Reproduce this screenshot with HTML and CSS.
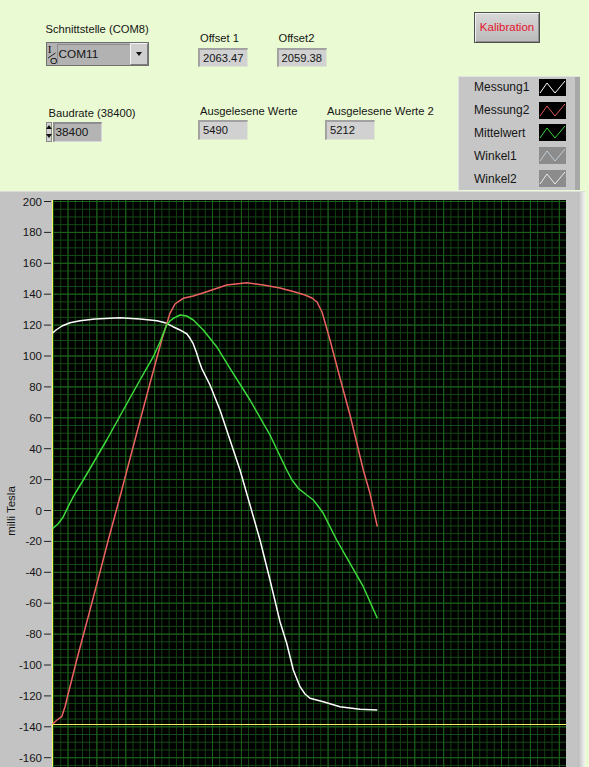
FILE: index.html
```html
<html>
<head>
    <meta charset="UTF-8"/>
    <title>Magnetfeld Messung</title>
    <link rel="stylesheet" href="styles.css">
</head>
<body>
<div class="panel">
    <div class="row row1">
        <div class="ctl ctl-port">
            <div class="lbl">Schnittstelle (COM8)</div>
            <div class="combo">
                <svg class="io" width="10" height="22" viewBox="0 0 10 22">
                    <text x="1" y="10" font-size="10" font-family="Liberation Serif, serif">I</text>
                    <line x1="1" y1="15" x2="8.5" y2="10" stroke="#111" stroke-width="0.9"/>
                    <text x="3" y="20.5" font-size="9.5" font-family="Liberation Sans, sans-serif">O</text>
                </svg>
                <div class="combo-field">COM11</div>
                <div class="combo-drop"><span class="tri-down"></span></div>
            </div>
        </div>
        <div class="ctl ctl-off1">
            <div class="lbl">Offset 1</div>
            <div class="ind">2063.47</div>
        </div>
        <div class="ctl ctl-off2">
            <div class="lbl">Offset2</div>
            <div class="ind">2059.38</div>
        </div>
        <button class="btn-kal">Kalibration</button>
    </div>
    <div class="row row2">
        <div class="ctl ctl-baud">
            <div class="lbl lbl-baud">Baudrate (38400)</div>
            <div class="numeric">
                <div class="spin"><span class="tri-up"></span><span class="tri-down"></span></div>
                <div class="num-field">38400</div>
            </div>
        </div>
        <div class="ctl ctl-werte">
            <div class="lbl">Ausgelesene Werte</div>
            <div class="ind ind-tall">5490</div>
        </div>
        <div class="ctl ctl-werte2">
            <div class="lbl">Ausgelesene Werte 2</div>
            <div class="ind ind-tall">5212</div>
        </div>
        <div class="legend">
            <div class="lg-row">
                <span class="lg-name">Messung1</span>
                <svg class="sw" width="27" height="17"><rect width="27" height="17" fill="#000"/><polyline points="1,14 8,4 16,14 26,2" fill="none" stroke="#fff"/></svg>
            </div>
            <div class="lg-row">
                <span class="lg-name">Messung2</span>
                <svg class="sw" width="27" height="17"><rect width="27" height="17" fill="#000"/><polyline points="1,14 8,4 16,14 26,2" fill="none" stroke="#e45a5a"/></svg>
            </div>
            <div class="lg-row">
                <span class="lg-name">Mittelwert</span>
                <svg class="sw" width="27" height="17"><rect width="27" height="17" fill="#000"/><polyline points="1,14 8,4 16,14 26,2" fill="none" stroke="#3ad43a"/></svg>
            </div>
            <div class="lg-row">
                <span class="lg-name">Winkel1</span>
                <svg class="sw" width="27" height="17"><rect width="27" height="17" fill="#8c8c8c"/><polyline points="1,14 8,4 16,14 26,2" fill="none" stroke="#c4ccd6"/></svg>
            </div>
            <div class="lg-row">
                <span class="lg-name">Winkel2</span>
                <svg class="sw" width="27" height="17"><rect width="27" height="17" fill="#8c8c8c"/><polyline points="1,14 8,4 16,14 26,2" fill="none" stroke="#ececec"/></svg>
            </div>
        </div>
    </div>
</div>

<div class="chart">
<svg class="graph" width="589" height="576" viewBox="0 191 589 576">
    <defs>
        <pattern id="minor" x="53.05" y="201" width="7.225" height="7.725" patternUnits="userSpaceOnUse">
            <path d="M0 0.5H7.225M0.5 0V7.725" stroke="#134a13" shape-rendering="crispEdges"/>
        </pattern>
        <pattern id="major" x="501" y="201" width="28.9" height="30.9" patternUnits="userSpaceOnUse">
            <path d="M0 0.5H28.9M0.5 0V30.9" stroke="#1b621b" shape-rendering="crispEdges"/>
        </pattern>
        <linearGradient id="edge" x1="0" y1="0" x2="1" y2="0">
            <stop offset="0" stop-color="#b9b9b9"/>
            <stop offset="0.5" stop-color="#d9d9d9"/>
            <stop offset="1" stop-color="#f2f2f2"/>
        </linearGradient>
    </defs>

    <!-- frame -->
    <rect x="0" y="191" width="580" height="576" fill="#c3c3c3"/>
    <rect x="578" y="191" width="7" height="576" fill="url(#edge)"/>
    <rect x="0" y="191" width="585" height="1" fill="#dcdcdc"/>

    <!-- plot area -->
    <rect x="52" y="200" width="514" height="567" fill="#000"/>
    <rect x="53" y="200" width="513" height="567" fill="url(#minor)"/>
    <rect x="53" y="200" width="513" height="567" fill="url(#major)"/>
    <line x1="52.5" y1="200" x2="52.5" y2="767" stroke="#f2f25a"/>
    <line x1="52" y1="724.5" x2="566" y2="724.5" stroke="#f2f25a"/>

    <!-- curves -->
    <polyline class="trace" stroke="#ffffff" points="52.7,333 56,330 62,326 70,322.7 80,320.7 95,319 110,318.3 120,317.7 140,319 150,320 157,320.7 165,322.7 173,326.7 180,330 183,331.7 187,334 190,338.3 193,343.3 196.7,353.3 199.3,361.7 201.7,368.3 210,385 220,410 230,440 240,470 250,505 260,540 270,580 280,621.7 286.7,643.3 293.3,670 300,686.7 305,694 310,698.3 323.3,701.7 340,706.7 360,709.3 377.3,710"/>
    <polyline class="trace" stroke="#ec6262" points="52.5,724 57,720 61.7,716.7 65,706.7 68.3,693.3 71.7,680 76.7,660 90,610 100,572 108.3,540 120,496.7 136.7,433.3 150,383.3 161.7,340 170,313.3 175,304 178.3,301.7 183.3,298.3 193.3,296 206.7,291.7 226.7,285 246.7,282.7 263.3,285 280,288 295,292 305,295 312,298 317,302 322,312 330,340 340,378 350,415 363.3,470 370,493.3 377.3,526.7"/>
    <polyline class="trace" stroke="#3cdc3c" points="52.7,528.3 58,524 63.3,516.7 68,507 73.3,496.7 83.3,480 95,460 106.7,440 123.3,410 140,380 153.3,356.7 160,342 166.7,325 170,321 173.3,318.3 180,315 186.7,316 193.3,320 200,326.7 203.3,330 216.7,346.7 230,368.3 250,400 270,435 286.7,470 292,480 298.3,488.3 306.7,495 313.3,500 318,506 323.3,513.3 336.7,540 350,563.3 363.3,586.7 377.3,618.3"/>

    <!-- y axis -->
    <g class="ticks">
        <path d="M44 201.5H51M44 232.4H51M44 263.3H51M44 294.2H51M44 325.1H51M44 356H51M44 386.9H51M44 417.8H51M44 448.7H51M44 479.6H51M44 510.5H51M44 541.4H51M44 572.3H51M44 603.2H51M44 634.1H51M44 665H51M44 695.9H51M44 726.8H51M44 757.7H51" stroke="#222"/>
    </g>
    <g class="axis-labels">
        <text x="42" y="205.5">200</text>
        <text x="42" y="236.4">180</text>
        <text x="42" y="267.3">160</text>
        <text x="42" y="298.2">140</text>
        <text x="42" y="329.1">120</text>
        <text x="42" y="360">100</text>
        <text x="42" y="390.9">80</text>
        <text x="42" y="421.8">60</text>
        <text x="42" y="452.7">40</text>
        <text x="42" y="483.6">20</text>
        <text x="42" y="514.5">0</text>
        <text x="42" y="545.4">-20</text>
        <text x="42" y="576.3">-40</text>
        <text x="42" y="607.2">-60</text>
        <text x="42" y="638.1">-80</text>
        <text x="42" y="669">-100</text>
        <text x="42" y="699.9">-120</text>
        <text x="42" y="730.8">-140</text>
        <text x="42" y="761.7">-160</text>
    </g>
    <text class="axis-name" transform="translate(15 511) rotate(-90)">milli Tesla</text>
</svg>
</div>
</body>
</html>
```

FILE: styles.css
```css
body {
    margin: 0;
    width: 589px;
    height: 767px;
    overflow: hidden;
    background-color: #eafad2;
    font-family: "Liberation Sans", Arial, sans-serif;
    font-size: 11.2px;
    color: #151515;
}

.row {
    display: flex;
    align-items: flex-start;
    padding-left: 45.5px;
}

.row1 {
    height: 76px;
}

.row2 {
    height: 115px;
}

.lbl {
    line-height: 14px;
    white-space: nowrap;
}

/* column widths keep the controls where the panel has them */
.ctl-port {
    width: 152.5px;
    margin-top: 21.5px;
}

.ctl-off1 {
    width: 78.5px;
    margin-top: 31px;
}

.ctl-off2 {
    width: 197.5px;
    margin-top: 31px;
}

.ctl-off1 .lbl,
.ctl-off2 .lbl,
.ctl-werte .lbl,
.ctl-werte2 .lbl {
    padding-left: 2px;
}

.ctl-baud {
    width: 152.5px;
    margin-top: 30.2px;
}

.lbl-baud {
    padding-left: 3px;
}

.ctl-werte {
    width: 127px;
    margin-top: 28.2px;
}

.ctl-werte2 {
    width: 133px;
    margin-top: 28.2px;
}

/* ring / combo box */
.combo {
    display: flex;
    width: 103px;
    height: 24px;
    margin-top: 6px;
    box-sizing: border-box;
    border: 1px solid #707070;
    background-color: #b2b2b2;
}

.combo .io {
    flex: none;
}

.combo-field {
    flex: 1;
    margin: 1px 0;
    padding-left: 1px;
    border-top: 1px solid #8c8c8c;
    border-left: 1px solid #8c8c8c;
    line-height: 19px;
    font-size: 11.8px;
}

.combo-drop {
    flex: none;
    width: 16px;
    display: flex;
    align-items: center;
    justify-content: center;
    background-color: #cfcfcf;
    border-left: 1px solid #f4f4f4;
    border-top: 1px solid #f4f4f4;
    border-right: 1px solid #7c7c7c;
    border-bottom: 1px solid #7c7c7c;
}

.tri-down {
    width: 0;
    height: 0;
    border-left: 3.5px solid transparent;
    border-right: 3.5px solid transparent;
    border-top: 4px solid #111;
}

.tri-up {
    width: 0;
    height: 0;
    border-left: 3px solid transparent;
    border-right: 3px solid transparent;
    border-bottom: 4px solid #111;
}

/* numeric control */
.numeric {
    display: flex;
    margin-top: 1.5px;
    height: 20px;
}

.spin {
    width: 6px;
    display: flex;
    flex-direction: column;
    justify-content: space-around;
    align-items: center;
    background-color: #d4d4d4;
    border: 1px solid #8a8a8a;
    box-sizing: border-box;
    margin-right: 1px;
}

.spin .tri-down {
    border-left-width: 3px;
    border-right-width: 3px;
}

.num-field {
    width: 49px;
    box-sizing: border-box;
    background-color: #b4b4b4;
    border-top: 2px solid #8e8e8e;
    border-left: 2px solid #8e8e8e;
    border-right: 1px solid #d6d6d6;
    border-bottom: 1px solid #d6d6d6;
    padding-left: 1px;
    line-height: 17px;
    font-size: 11.8px;
}

/* indicators */
.ind {
    width: 50px;
    height: 19px;
    margin-top: 3.3px;
    box-sizing: border-box;
    background-color: #d1d1d1;
    border-top: 2px solid #a2a2a2;
    border-left: 2px solid #a2a2a2;
    border-right: 1px solid #dde9cf;
    border-bottom: 1px solid #dde9cf;
    padding-left: 3px;
    line-height: 16px;
}

.ind-tall {
    height: 20px;
    margin-top: 1.8px;
    line-height: 17px;
}

.btn-kal {
    width: 66px;
    height: 31px;
    margin-top: 11.5px;
    padding: 0;
    border: 1px solid #4e4e4e;
    background: linear-gradient(#d8d8d8, #bababa);
    box-shadow: inset 1px 1px #efefef, inset -1px -1px #8e8e8e;
    color: #e4132d;
    font-family: "Liberation Sans", Arial, sans-serif;
    font-size: 11.5px;
}

/* plot legend */
.legend {
    width: 122px;
    height: 114px;
    box-sizing: border-box;
    background-color: #c6c6c6;
    border-left: 1px solid #e2e2e2;
    border-top: 1px solid #e2e2e2;
    box-shadow: inset -5px 0 #a8a8a8;
}

.lg-row {
    display: flex;
    align-items: center;
    height: 22.8px;
}

.lg-row:first-child {
    margin-top: -1px;
}

.lg-name {
    width: 65px;
    padding-left: 15px;
    white-space: nowrap;
    font-size: 12px;
}

.sw {
    display: block;
}

/* waveform chart */
.chart {
    height: 576px;
}

.graph {
    display: block;
}

.trace {
    fill: none;
    stroke-width: 1.5;
    stroke-linejoin: round;
}

.axis-labels text {
    font-family: "Liberation Sans", Arial, sans-serif;
    font-size: 11.5px;
    fill: #151515;
    text-anchor: end;
}

.axis-name {
    font-family: "Liberation Sans", Arial, sans-serif;
    font-size: 11.5px;
    fill: #151515;
    text-anchor: middle;
}
```
